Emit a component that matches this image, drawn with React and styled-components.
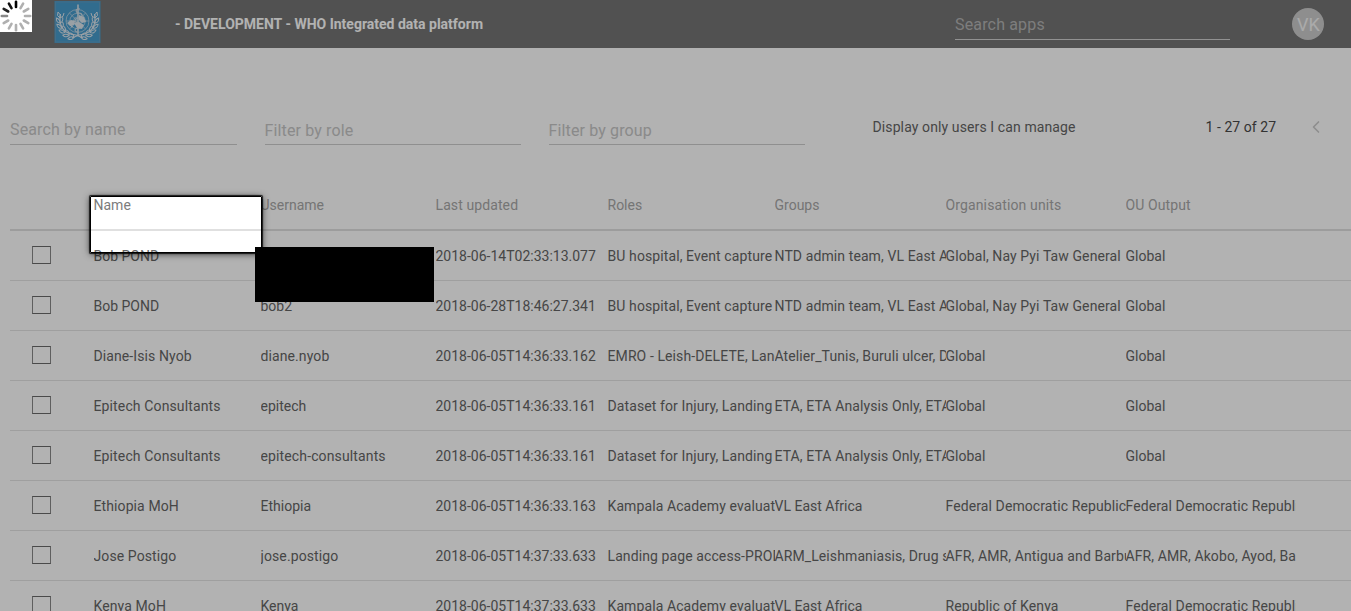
import React from "react";
import styled, { createGlobalStyle } from "styled-components";
import { ChevronLeft } from "lucide-react";

const GlobalStyle = createGlobalStyle`
  * { box-sizing: border-box; }
  body { margin: 0; background: #fff; overflow: hidden; font-family: Roboto, "Liberation Sans", sans-serif; }
`;
const Page = styled.div`
  position: relative;
  width: 1351px;
  height: 611px;
  overflow: hidden;
`;
const Header = styled.header`
  height: 48px;
  background: #747474;
  display: flex;
  align-items: center;
  padding: 0 27px 0 54px;
`;
const Logo = styled.svg`
  width: 47px;
  height: 42px;
  display: block;
  flex: none;
  margin-top: -4px;
`;
const Title = styled.h1`
  margin: 0 0 0 74px;
  width: 780px;
  flex: none;
  color: #fff;
  font-size: 14px;
  font-weight: 700;
  line-height: 48px;
`;
const AppSearch = styled.div`
  width: 275px;
  height: 32px;
  flex: none;
  padding-top: 1px;
  border-bottom: 1px solid #d0d0d0;
  color: #b4b4b4;
  font-size: 16px;
  line-height: 32px;
  letter-spacing: 0.16px;
`;
const Avatar = styled.div`
  margin-left: auto;
  width: 32px;
  height: 32px;
  border-radius: 50%;
  background: #ccc;
  color: #f4f4f4;
  font-size: 18px;
  line-height: 33px;
  padding-left: 5px;
`;
const Filters = styled.section`
  height: 97px;
  padding: 69px 30px 0 10px;
  display: flex;
`;
const Field = styled.div`
  width: ${(p) => p.$w}px;
  height: 28px;
  flex: none;
  margin-right: ${(p) => p.$gap}px;
  border-bottom: 1px solid #cdcdcd;
  color: #c6c6c6;
  font-size: 16px;
  line-height: 24px;
  letter-spacing: 0.14px;
  padding-top: ${(p) => p.$drop}px;
`;
const ManageLabel = styled.div`
  width: 333px;
  flex: none;
  font-size: 14px;
  line-height: 20px;
  letter-spacing: 0.11px;
  color: #656565;
`;
const Pager = styled.div`
  display: flex;
  flex: 1;
  justify-content: space-between;
  font-size: 14px;
  line-height: 20px;
  letter-spacing: 0.06px;
  color: #4a4a4a;
  svg { margin-right: -5px; color: #cacaca; }
`;
const Table = styled.div`
  margin: 34px 0 0 10px;
`;
const Row = styled.div`
  display: grid;
  grid-template-columns: 83.5px 167px 175px 172px 167px 171px 180px 170px;
  height: 50px;
  border-bottom: 1px solid #e4e4e4;
  color: #656565;
  font-size: 14px;
  line-height: 50px;
`;
const HeadRow = styled(Row)`
  height: 52px;
  border-bottom: 2px solid #e0e0e0;
  color: #a8a8a8;
  line-height: 52px;
`;
const Cell = styled.div`
  overflow: hidden;
  white-space: nowrap;
  letter-spacing: ${(p) => p.$ls || 0}px;
  ${(p) => p.$lit && "color: #7c7c7c;"}
`;
const Check = styled.div`
  width: 19px;
  height: 18px;
  margin: 15px 0 0 22px;
  border: 1px solid #6b6b6b;
  border-left-color: #888;
  border-right-color: #888;
`;
const Spotlight = styled.div`
  position: absolute;
  left: 90px;
  top: 196px;
  width: 172px;
  height: 57px;
  border: 1px solid #000;
  border-radius: 1px;
  box-shadow: 0 0 1px 0.5px rgba(0, 0, 0, 0.8), 0 1px 7px rgba(0, 0, 0, 0.7), 0 0 0 2000px rgba(0, 0, 0, 0.3);
`;
const Redaction = styled.div`
  position: absolute;
  left: 255px;
  top: 247px;
  width: 179px;
  height: 55px;
  background: #000;
`;
const Spinner = styled.svg`
  position: absolute;
  left: 0;
  top: 0;
  width: 32px;
  height: 32px;
  background: #fff;
`;

const headings = ["Name", "Username", "Last updated", "Roles", "Groups", "Organisation units", "OU Output"];
const users = [
  ["Bob POND", "bob", "2018-06-14T02:33:13.077", "BU hospital, Event capture", "NTD admin team, VL East Africa", "Global, Nay Pyi Taw General", "Global"],
  ["Bob POND", "bob2", "2018-06-28T18:46:27.341", "BU hospital, Event capture", "NTD admin team, VL East Africa", "Global, Nay Pyi Taw General", "Global"],
  ["Diane-Isis Nyob", "diane.nyob", "2018-06-05T14:36:33.162", "EMRO - Leish-DELETE, Landing", "Atelier_Tunis, Buruli ulcer, Data", "Global", "Global"],
  ["Epitech Consultants", "epitech", "2018-06-05T14:36:33.161", "Dataset for Injury, Landing", "ETA, ETA Analysis Only, ETA Data", "Global", "Global"],
  ["Epitech Consultants", "epitech-consultants", "2018-06-05T14:36:33.161", "Dataset for Injury, Landing", "ETA, ETA Analysis Only, ETA Data", "Global", "Global"],
  ["Ethiopia MoH", "Ethiopia", "2018-06-05T14:36:33.163", "Kampala Academy evaluation", "VL East Africa", "Federal Democratic Republic", "Federal Democratic Republic"],
  ["Jose Postigo", "jose.postigo", "2018-06-05T14:37:33.633", "Landing page access-PROD", "ARM_Leishmaniasis, Drug supply", "AFR, AMR, Antigua and Barbuda", "AFR, AMR, Akobo, Ayod, Baliet"],
  ["Kenya MoH", "Kenya", "2018-06-05T14:37:33.633", "Kampala Academy evaluation", "VL East Africa", "Republic of Kenya", "Federal Democratic Republic"],
];

const tracking = (text) => {
  if (text.startsWith("2018") || text === "VL East Africa" || text.length < 9) return 0;
  if (text.includes("onsultants") || text === "Organisation units" || text.startsWith("AFR, AMR, Ant")) return 0.13;
  return 0.1;
};

const leaves = [0, 1, 2, 3, 4, 5];

function Emblem() {
  return (
    <Logo viewBox="0 0 47 42">
      <rect x=".5" width="46" height="42" fill="#479bcc" />
      <rect x="1.5" y="1" width="44" height="40" fill="none" stroke="#5f9cc4" />
      <g fill="none" stroke="#e2e8ec" strokeWidth=".7" opacity=".85">
        <circle cx="23.5" cy="20" r="11.5" />
        <circle cx="23.5" cy="20" r="7.7" />
        <circle cx="23.5" cy="20" r="4" />
        <path d="M12 20h23M15.4 12l16.2 16M31.6 12l-16.2 16" />
        <path d="M24 3.500v31" strokeWidth="1.7" />
        <path d="M26 8c-5-1-5 4-1 4s4 5 0 5-6 4-1 5 5 4 0 5-3 4 0 4" strokeWidth="1.1" />
      </g>
      <path d="M13 22l4-3 4 1-1 4-4 1zM25 14l5 2 2 5-4 1-3-3zM20 22l5-1 5 3-2 4-5-1zM16 24l3 1-1 2z" fill="#dce5ec" />
      {[1, -1].map((side) => (
        <g key={side} transform={side === 1 ? undefined : "translate(47 0) scale(-1 1)"} fill="none" stroke="#dce5ec">
          <path d="M6.500 13C4 25 10 33 22 34l7 3" strokeWidth="1.1" />
          {leaves.map((i) => (
            <path key={i} d="M6 17q-4-2-2-6q3 2 2 6q4-1 4-5" strokeWidth="1" transform={`rotate(${-i * 17} 23.5 19)`} />
          ))}
        </g>
      ))}
    </Logo>
  );
}

const spokes = ["#000", "#b0b0b0", "#b0b0b0", "#b0b0b0", "#b0b0b0", "#b0b0b0", "#b0b0b0", "#b0b0b0", "#b0b0b0", "#888", "#222", "#111"];

export default function App() {
  return (
    <Page>
      <GlobalStyle />
      <Header>
        <Emblem />
        <Title>- DEVELOPMENT - WHO Integrated data platform</Title>
        <AppSearch>Search apps</AppSearch>
        <Avatar>VK</Avatar>
      </Header>
      <Filters>
        <Field $w={227} $gap={27.5} $drop={1}>Search by name</Field>
        <Field $w={256} $gap={28} $drop={2}>Filter by role</Field>
        <Field $w={256} $gap={68} $drop={2}>Filter by group</Field>
        <ManageLabel>Display only users I can manage</ManageLabel>
        <Pager>
          <span>1 - 27 of 27</span>
          <ChevronLeft size={20} />
        </Pager>
      </Filters>
      <Table>
        <HeadRow>
          <Cell />
          {headings.map((h) => <Cell key={h} $ls={tracking(h)} $lit={h === "Name"}>{h}</Cell>)}
        </HeadRow>
        {users.map((user, i) => (
          <Row key={i}>
            <Check />
            {user.map((value, c) => <Cell key={c} $ls={tracking(value)}>{value}</Cell>)}
          </Row>
        ))}
      </Table>
      <Spotlight />
      <Redaction />
      <Spinner viewBox="0 0 32 32">
        {spokes.map((color, i) => (
          <line key={i} x1="16" y1="1.800" x2="16" y2="7" stroke={color} strokeWidth="2.6" strokeLinecap="round" transform={`rotate(${i * 30} 16 16)`} />
        ))}
      </Spinner>
    </Page>
  );
}
